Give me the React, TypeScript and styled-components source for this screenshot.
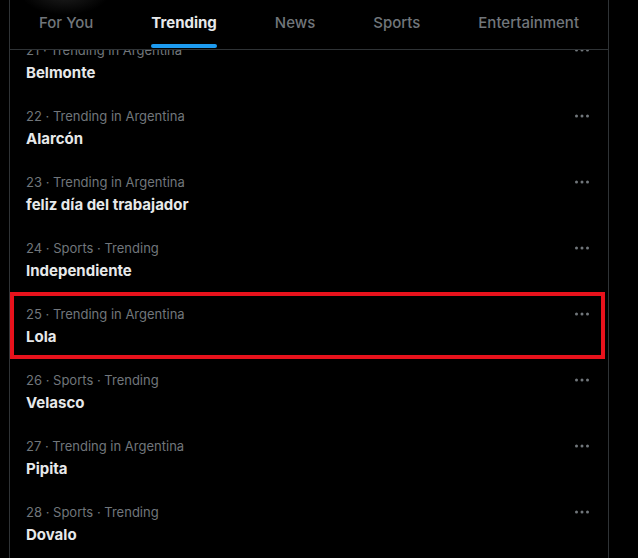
import styled, { createGlobalStyle } from "styled-components";

const Global = createGlobalStyle`
  html, body {
    margin: 0;
    padding: 0;
    background: #000;
    height: 100%;
    overflow: hidden;
  }
  body {
    font-family: "Segoe UI", Inter, "Noto Sans", "Liberation Sans", sans-serif;
    -webkit-font-smoothing: antialiased;
  }
`;

const Page = styled.div`
  width: 638px;
  height: 558px;
  background: #000;
  overflow: hidden;
  position: relative;
`;

const Glow = styled.div`
  position: absolute;
  left: 20px;
  top: -30px;
  width: 90px;
  height: 45px;
  border-radius: 50%;
  background: radial-gradient(ellipse at center, rgba(90, 90, 90, 0.35), rgba(0, 0, 0, 0) 70%);
  pointer-events: none;
  z-index: 3;
`;

const Column = styled.main`
  margin-left: 9px;
  width: 598px;
  height: 558px;
  border-left: 1px solid #2f3336;
  border-right: 1px solid #2f3336;
  display: flex;
  flex-direction: column;
  overflow: hidden;
`;

const TabBar = styled.nav`
  position: relative;
  z-index: 2;
  display: flex;
  height: 49px;
  background: #000;
  border-bottom: 1px solid #2f3336;
  flex-shrink: 0;
`;

const Tab = styled.div<{ $active?: boolean }>`
  flex: 1 1 auto;
  display: flex;
  justify-content: center;
  padding: 0 16px;
  font-size: 15px;
  line-height: 20px;
  font-weight: ${(p) => (p.$active ? 700 : 500)};
  color: ${(p) => (p.$active ? "#e7e9ea" : "#71767b")};
`;

const TabLabel = styled.span`
  position: relative;
  height: 49px;
  box-sizing: border-box;
  padding-top: 13px;
`;

const Underline = styled.span`
  position: absolute;
  left: 0;
  right: 0;
  bottom: 1px;
  height: 4px;
  border-radius: 9999px;
  background: #1d9bf0;
`;

const List = styled.div`
  margin-top: -21px;
  display: flex;
  flex-direction: column;
`;

const Item = styled.div`
  position: relative;
  height: 66px;
  box-sizing: border-box;
  padding: 13px 16px 0 16px;
  display: flex;
  justify-content: space-between;
`;

const Marker = styled.div`
  position: absolute;
  left: 0;
  top: -1px;
  width: 595px;
  height: 67px;
  box-sizing: border-box;
  border: 4px solid #e8121c;
  pointer-events: none;
`;

const Texts = styled.div`
  display: flex;
  flex-direction: column;
`;

const Meta = styled.div`
  font-size: 13px;
  line-height: 16px;
  color: #71767b;
`;

const Title = styled.div`
  margin-top: 5px;
  font-size: 15px;
  line-height: 20px;
  font-weight: 700;
  color: #e7e9ea;
`;

const More = styled.svg`
  margin-top: -2px;
  flex-shrink: 0;
`;

const tabs = ["For You", "Trending", "News", "Sports", "Entertainment"];

const trends = [
  { n: 21, meta: "Trending in Argentina", title: "Belmonte" },
  { n: 22, meta: "Trending in Argentina", title: "Alarcón" },
  { n: 23, meta: "Trending in Argentina", title: "feliz día del trabajador" },
  { n: 24, meta: "Sports · Trending", title: "Independiente" },
  { n: 25, meta: "Trending in Argentina", title: "Lola", marked: true },
  { n: 26, meta: "Sports · Trending", title: "Velasco" },
  { n: 27, meta: "Trending in Argentina", title: "Pipita" },
  { n: 28, meta: "Sports · Trending", title: "Dovalo" },
];

function App() {
  return (
    <Page>
      <Global />
      <Glow />
      <Column>
        <TabBar>
          {tabs.map((t) => (
            <Tab key={t} $active={t === "Trending"}>
              <TabLabel>
                {t}
                {t === "Trending" ? <Underline /> : null}
              </TabLabel>
            </Tab>
          ))}
        </TabBar>
        <List>
          {trends.map((t) => (
            <Item key={t.n}>
              <Texts>
                <Meta>
                  {t.n} · {t.meta}
                </Meta>
                <Title>{t.title}</Title>
              </Texts>
              <More width="20" height="20" viewBox="0 0 20 20">
                <circle cx="4.5" cy="10" r="1.5" fill="#71767b" />
                <circle cx="10" cy="10" r="1.5" fill="#71767b" />
                <circle cx="15.5" cy="10" r="1.5" fill="#71767b" />
              </More>
              {t.marked ? <Marker /> : null}
            </Item>
          ))}
        </List>
      </Column>
    </Page>
  );
}

export default App;
